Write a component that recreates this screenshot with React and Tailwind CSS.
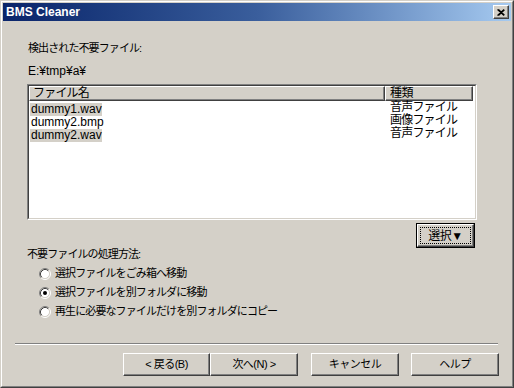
import { useState } from 'react';

const jp = '"Liberation Sans", "Noto Sans CJK JP", sans-serif';

function Radio({ checked }) {
  return (
    <svg width="12" height="12" viewBox="0 0 12 12" className="shrink-0">
      <circle cx="6" cy="6" r="4.5" fill="#ffffff" />
      <path d="M9.89 2.11 A5.5 5.5 0 0 0 2.11 9.89" fill="none" stroke="#808080" strokeWidth="1" />
      <path d="M9.89 2.11 A5.5 5.5 0 0 1 2.11 9.89" fill="none" stroke="#ffffff" strokeWidth="1" />
      <path d="M9.18 2.82 A4.5 4.5 0 0 0 2.82 9.18" fill="none" stroke="#404040" strokeWidth="1" />
      <path d="M9.18 2.82 A4.5 4.5 0 0 1 2.82 9.18" fill="none" stroke="#d4d0c8" strokeWidth="1" />
      {checked && <circle cx="6" cy="6" r="2" fill="#000000" />}
    </svg>
  );
}

function Btn({ children, className = '' }) {
  return (
    <div
      className={`h-[23px] flex items-center justify-center bg-[#d4d0c8] border border-t-white border-l-white border-r-[#404040] border-b-[#404040] shadow-[inset_-1px_-1px_0_#808080] text-[11px] tracking-[-0.5px] ${className}`}
    >
      {children}
    </div>
  );
}

export default function App() {
  const [modo, setModo] = useState(1);

  const archivos = [
    { nombre: 'dummy1.wav', tipo: '音声ファイル', marcado: true },
    { nombre: 'dummy2.bmp', tipo: '画像ファイル', marcado: false },
    { nombre: 'dummy2.wav', tipo: '音声ファイル', marcado: true },
  ];

  const opciones = [
    '選択ファイルをごみ箱へ移動',
    '選択ファイルを別フォルダに移動',
    '再生に必要なファイルだけを別フォルダにコピー',
  ];

  return (
    <div
      className="w-[514px] h-[388px] bg-[#d4d0c8] text-black border border-t-[#d4d0c8] border-l-[#d4d0c8] border-r-[#404040] border-b-[#404040]"
      style={{ fontFamily: jp }}
    >
      <div className="h-full border border-t-white border-l-white border-r-[#808080] border-b-[#808080] p-[1px] flex flex-col">

        {/* TITLE BAR */}
        <div className="h-[18px] shrink-0 flex items-center justify-between pl-[3px] pr-[2px] bg-linear-to-r from-[#0a246a] via-[#3a5e9c] to-[#a6caf0]">
          <span className="text-white font-bold text-[12px] leading-none">BMS Cleaner</span>
          <div className="w-[16px] h-[14px] bg-[#d4d0c8] border border-t-white border-l-white border-r-[#404040] border-b-[#404040] shadow-[inset_-1px_-1px_0_#808080] flex items-center justify-center">
            <svg width="8" height="7" viewBox="0 0 8 7">
              <path d="M0.5 0.5 L7 6.5 M1.5 0.5 L7.5 6.2 M7 0.5 L0.5 6.5 M7.5 0.8 L1.5 6.5" stroke="#000" strokeWidth="1.1" />
            </svg>
          </div>
        </div>

        {/* CONTENT */}
        <div className="flex flex-col">
          <p className="mt-[21px] ml-[25px] h-[13px] leading-[13px] text-[11px] tracking-[-0.9px]">検出された不要ファイル:</p>
          <p className="mt-[10px] ml-[25px] h-[13px] leading-[13px] text-[12px]">E:¥tmp¥a¥</p>

          {/* Lista */}
          <div className="mt-[6px] ml-[24px] w-[450px] h-[136px] border border-t-[#808080] border-l-[#808080] border-r-white border-b-white">
            <div className="h-full border border-t-[#404040] border-l-[#404040] border-r-[#d4d0c8] border-b-[#d4d0c8] bg-white flex flex-col">
              <div className="flex h-[15px] shrink-0">
                <div className="w-[356px] bg-[#d4d0c8] border border-t-white border-l-white border-r-[#404040] border-b-[#404040] shadow-[inset_-1px_-1px_0_#808080] pl-[3px] text-[12px] leading-[12px] tracking-[-0.8px]">
                  ファイル名
                </div>
                <div className="w-[88px] bg-[#d4d0c8] border border-t-white border-l-white border-r-[#404040] border-b-[#404040] shadow-[inset_-1px_-1px_0_#808080] pl-[4px] text-[12px] leading-[12px] tracking-[-0.5px]">
                  種類
                </div>
              </div>
              {archivos.map((a) => (
                <div key={a.nombre} className="flex h-[13px] leading-[13px]">
                  <div className="w-[356px] pl-[1px]">
                    <span className={`inline-block h-[13px] px-[1px] w-[72px] text-[12px] ${a.marcado ? 'bg-[#d4d0c8]' : ''}`}>
                      {a.nombre}
                    </span>
                  </div>
                  <div className="pl-[5px] text-[12px] tracking-[-0.8px]">{a.tipo}</div>
                </div>
              ))}
            </div>
          </div>

          {/* Boton seleccionar */}
          <div className="mt-[3px] ml-[24px] w-[450px] flex justify-end pr-[2px]">
            <div className="w-[59px] h-[25px] border border-black">
              <div className="h-full border border-t-white border-l-white border-r-[#404040] border-b-[#404040] shadow-[inset_-1px_-1px_0_#808080] p-[2px]">
                <div className="h-full border border-dotted border-black flex items-center justify-center text-[12px] tracking-[-0.5px] leading-none">
                  選択▼
                </div>
              </div>
            </div>
          </div>

          <p className="ml-[24px] h-[12px] leading-[12px] text-[11px] tracking-[-0.9px]">不要ファイルの処理方法:</p>

          <div className="mt-[4px] ml-[36px] flex flex-col">
            {opciones.map((texto, i) => (
              <label key={texto} className="h-[19px] flex items-center gap-[4px] cursor-default" onClick={() => setModo(i)}>
                <Radio checked={modo === i} />
                <span className="text-[11px] tracking-[-0.9px]">{texto}</span>
              </label>
            ))}
          </div>

          {/* Separador */}
          <div className="mt-[22px] ml-[12px] w-[483px] border-t border-t-[#808080] border-b border-b-white"></div>

          {/* Botones */}
          <div className="mt-[8px] ml-[120px] flex">
            <Btn className="w-[87px]">&lt; 戻る(B)</Btn>
            <Btn className="w-[88px]">次へ(N) &gt;</Btn>
            <Btn className="w-[88px] ml-[13px]">キャンセル</Btn>
            <Btn className="w-[88px] ml-[12px]">ヘルプ</Btn>
          </div>
        </div>
      </div>
    </div>
  );
}
